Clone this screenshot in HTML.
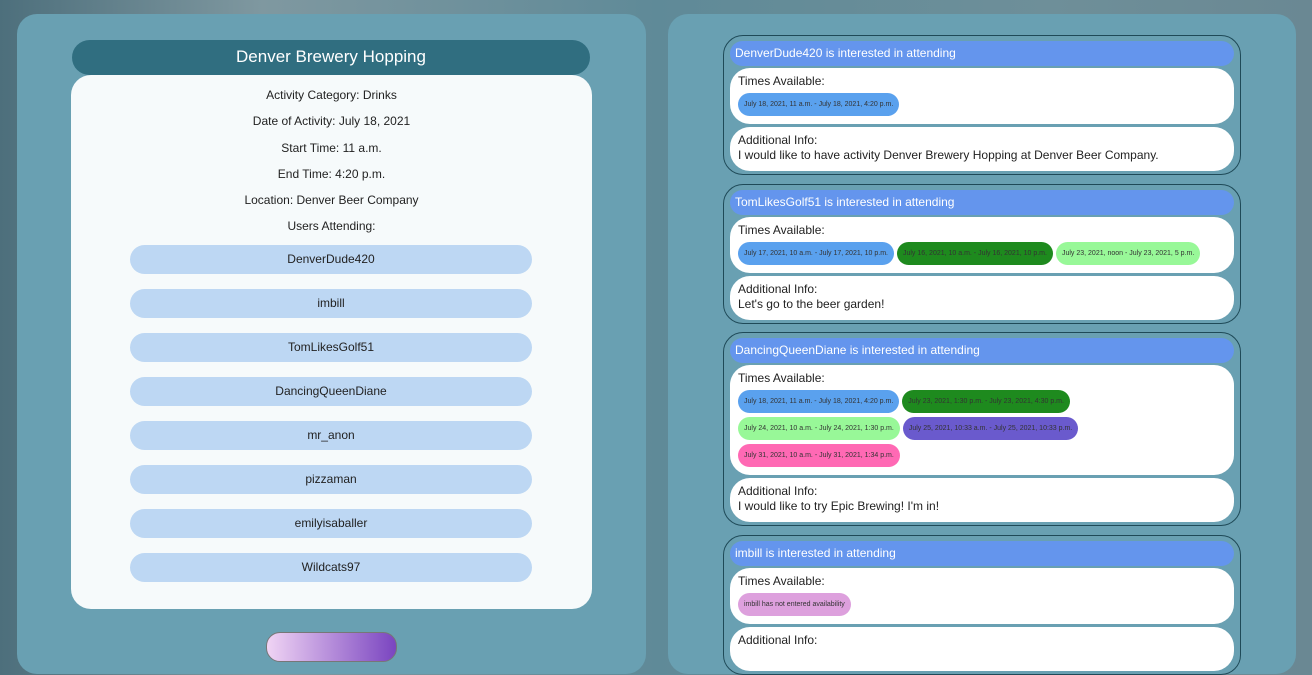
<!DOCTYPE html>
<html><head><style>
*{box-sizing:border-box;margin:0;padding:0}
body{width:1312px;height:640px;overflow:hidden;font-family:"Liberation Sans",sans-serif;background:linear-gradient(90deg,#4d6f7c 0%,#7f98a0 20%,#5f8a98 50%,#6e8f99 80%,#6a8893 100%);position:relative;color:#222}
.panel{position:absolute;top:14px;height:660px;background:#69a0b2;border-radius:20px}
.hdr{position:absolute;left:72px;top:40px;width:518px;height:35px;background:#306e80;border-radius:18px;color:#fff;font-size:17px;text-align:center;line-height:34px}
.card{position:absolute;left:71px;top:75px;width:521px;height:534px;background:#f6fafb;border-radius:20px;font-size:12px;text-align:center}
.ln{position:absolute;left:0;width:100%}
.pill{position:absolute;left:59px;width:402px;height:29px;background:#bdd7f3;border-radius:15px;line-height:29px}
.btn{position:absolute;left:266px;top:632px;width:131px;height:30px;border-radius:14px;background:linear-gradient(90deg,#f0d4f4,#7a45c0);border:1px solid #777}
.rc{position:absolute;left:723px;width:518px;border:1.5px solid #1f4a58;border-radius:20px;background:#69a0b2}
.rh{margin:5px 6px 2px 6px;height:25px;background:#6495ed;border-radius:13px;color:#fff;font-size:12px;line-height:24px;padding-left:5px}
.box{margin:0 6px 3px 6px;background:#fff;border-radius:20px;padding:6px 8px 8px 8px;font-size:12px;line-height:15px}
.chips{margin-top:4px;display:flex;flex-wrap:wrap;gap:4px 3px;width:360px}
.chip{height:23px;border-radius:12px;font-size:7px;line-height:23px;padding:0 6px;color:#333;white-space:nowrap}
.b{background:#5aa1ee}.g{background:#1e8a1e}.lg{background:#98f898}.p{background:#6a5acd}.pk{background:#ff69b4}.pl{background:#dda0dd}
</style></head><body>
<div class="panel" style="left:17px;width:629px"></div>
<div class="panel" style="left:668px;width:628px"></div>
<div class="hdr">Denver Brewery Hopping</div>
<div class="card">
<div class="ln" style="top:13px">Activity Category: Drinks</div>
<div class="ln" style="top:39px">Date of Activity: July 18, 2021</div>
<div class="ln" style="top:66px">Start Time: 11 a.m.</div>
<div class="ln" style="top:92px">End Time: 4:20 p.m.</div>
<div class="ln" style="top:118px">Location: Denver Beer Company</div>
<div class="ln" style="top:144px">Users Attending:</div>
<div class="pill" style="top:170px">DenverDude420</div>
<div class="pill" style="top:214px">imbill</div>
<div class="pill" style="top:258px">TomLikesGolf51</div>
<div class="pill" style="top:302px">DancingQueenDiane</div>
<div class="pill" style="top:346px">mr_anon</div>
<div class="pill" style="top:390px">pizzaman</div>
<div class="pill" style="top:434px">emilyisaballer</div>
<div class="pill" style="top:478px">Wildcats97</div>
</div>
<div class="btn"></div>

<div class="rc" style="top:35px">
<div class="rh">DenverDude420 is interested in attending</div>
<div class="box" style="height:56px">Times Available:<div class="chips"><div class="chip b">July 18, 2021, 11 a.m. - July 18, 2021, 4:20 p.m.</div></div></div>
<div class="box" style="height:44px">Additional Info:<br>I would like to have activity Denver Brewery Hopping at Denver Beer Company.</div>
</div>
<div class="rc" style="top:184px">
<div class="rh">TomLikesGolf51 is interested in attending</div>
<div class="box" style="height:56px">Times Available:<div class="chips" style="width:500px"><div class="chip b">July 17, 2021, 10 a.m. - July 17, 2021, 10 p.m.</div><div class="chip g">July 16, 2021, 10 a.m. - July 16, 2021, 10 p.m.</div><div class="chip lg">July 23, 2021, noon - July 23, 2021, 5 p.m.</div></div></div>
<div class="box" style="height:44px">Additional Info:<br>Let's go to the beer garden!</div>
</div>
<div class="rc" style="top:332px">
<div class="rh">DancingQueenDiane is interested in attending</div>
<div class="box" style="height:110px">Times Available:<div class="chips"><div class="chip b">July 18, 2021, 11 a.m. - July 18, 2021, 4:20 p.m.</div><div class="chip g">July 23, 2021, 1:30 p.m. - July 23, 2021, 4:30 p.m.</div><div class="chip lg">July 24, 2021, 10 a.m. - July 24, 2021, 1:30 p.m.</div><div class="chip p">July 25, 2021, 10:33 a.m. - July 25, 2021, 10:33 p.m.</div><div class="chip pk">July 31, 2021, 10 a.m. - July 31, 2021, 1:34 p.m.</div></div></div>
<div class="box" style="height:44px">Additional Info:<br>I would like to try Epic Brewing! I'm in!</div>
</div>
<div class="rc" style="top:535px;height:140px">
<div class="rh">imbill is interested in attending</div>
<div class="box" style="height:56px">Times Available:<div class="chips"><div class="chip pl">imbill has not entered availability</div></div></div>
<div class="box" style="height:44px">Additional Info:</div>
</div>
</body></html>
